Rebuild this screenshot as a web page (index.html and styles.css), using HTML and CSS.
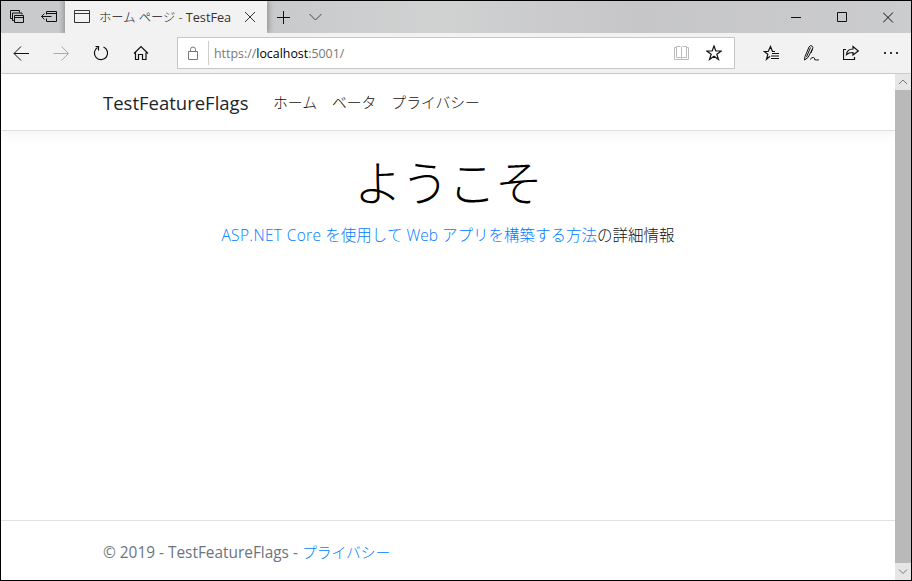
FILE: index.html
```
<!DOCTYPE html>
<html lang="ja">
<head>
<meta charset="utf-8">
<title>ホーム ページ - TestFeatureFlags</title>
<link rel="stylesheet" href="styles.css">
</head>
<body>
<div class="window">
  <div class="titlebar">
    <div class="tab-tools">
      <svg class="ic-tabs" width="16" height="16" viewBox="0 0 16 16"><path d="M3 9.500H1.500v-8h9v2M3.500 4v7.500H5M3.500 4h9.500v1.500M5.500 6.500h9v7h-9zM5.500 8.500h9"/></svg>
      <svg class="ic-aside" width="18" height="14" viewBox="0 0 18 14"><path d="M5.500 4.500v-3h10v10h-10v-3M5.500 3.500h10M.5 6.500h10M3.500 3.500l-3 3 3 3"/></svg>
    </div>
    <div class="tab">
      <svg width="16" height="14" viewBox="0 0 16 14"><path d="M.5.5h15v12H.5zM.5 3.500h15"/></svg>
      <span class="tab-title">ホーム ページ - <span class="latin">TestFea</span></span>
      <svg width="10" height="10" viewBox="0 0 10 10"><path d="M0 0l10 10M10 0L0 10"/></svg>
    </div>
    <svg class="ic-plus" width="13" height="13" viewBox="0 0 13 13"><path d="M6.500 0v13M0 6.500h13"/></svg>
    <svg class="ic-down" width="13" height="8" viewBox="0 0 13 8"><path d="M.5 1l6 6 6-6"/></svg>
    <div class="controls">
      <svg width="11" height="11" viewBox="0 0 11 11"><path d="M0 5.500h10"/></svg>
      <svg width="11" height="11" viewBox="0 0 11 11"><path d="M.5.500h9v9h-9z"/></svg>
      <svg width="11" height="11" viewBox="0 0 11 11"><path d="M0 .5l10 10M10 .5l-10 10"/></svg>
    </div>
  </div>
  <div class="toolbar">
    <div class="navigation">
      <svg width="16" height="16" viewBox="0 0 16 16"><path d="M1 8.500H16M8 1.500l-7 7 7 7"/></svg>
      <svg class="disabled" width="16" height="16" viewBox="0 0 16 16"><path d="M.5 8.500H15.500M8.500 1.500l7 7-7 7"/></svg>
      <svg class="bold" width="16" height="16" viewBox="0 0 16 16"><path d="M4.500 2.500A6.600 6.600 0 1 0 10.500 2M2.500 1.500h3v4"/></svg>
      <svg class="bold" width="16" height="16" viewBox="0 0 16 16"><path d="M1 8.500l7-7 7 7M2.500 7.500v7h3v-5h4v5h3.500v-7"/></svg>
    </div>
    <div class="address">
      <svg class="ic-lock" width="11" height="14" viewBox="0 0 11 14"><path d="M.5 5.500h9v8h-9zM2.500 5.500V3.500a2.500 2.500 0 0 1 5 0v2"/></svg>
      <div class="url">https://<b>localhost</b>:5001/</div>
      <svg class="ic-book" width="16" height="14" viewBox="0 0 16 14"><path d="M2.500 1.500h-2v12h14v-12h-2M2.500.5h4l1 1 1-1h4v11h-4l-1 1-1-1h-4zM7.500 1.500v12"/></svg>
      <svg class="ic-star" width="16" height="16" viewBox="0 0 16 16"><path d="M8 1l1.800 5h5.500l-4.500 3.200 1.700 5.300L8 11.300l-4.500 3.200 1.700-5.300L.700 6h5.500z"/></svg>
    </div>
    <div class="actions">
      <svg class="bold" width="16" height="16" viewBox="0 0 16 16"><path d="M7 11.300l-3.500 3 1.300-5L1.200 6.500h4L7.500 1.500l2 5M9 6.500h3M9 8.500h7M8 11h8M8 13.500h8"/></svg>
      <svg class="pen" width="17" height="16" viewBox="0 0 17 16"><path d="M1.500 15L2 11.500 6 2Q7.500-.5 9 1t.5 3L5 12.500 1.500 15M7.500 2.500L3.500 12M9.500 4L8 8M7 14.500q2-2.500 3.500-2t1 1.500 2 1 2.500-.5"/></svg>
      <svg class="bold" width="16" height="16" viewBox="0 0 16 16"><path d="M3 4.500H.5v10h11V12M3.500 9.500q.5-5.500 6.500-5.500V1.500l5.300 4.500L10 10V7.500q-4.500 0-6.500 2z"/></svg>
      <svg width="16" height="16" viewBox="0 0 16 16"><path class="dots" d="M1 7h2v2H1zM7 7h2v2H7zM13 7h2v2h-2z"/></svg>
    </div>
  </div>
  <div class="viewport">
    <div class="page">
      <header>
        <a class="brand">TestFeatureFlags</a>
        <nav><a>ホーム</a><a>ベータ</a><a>プライバシー</a></nav>
      </header>
      <main>
        <h1>ようこそ</h1>
        <p><a><span class="spaced">ASP.NET Core</span> を使用して Web アプリを構築する方法</a><span>の詳細情報</span></p>
      </main>
      <footer><span>© 2019 - TestFeatureFlags - </span><a>プライバシー</a></footer>
    </div>
    <div class="scrollbar">
      <svg width="16" height="16" viewBox="0 0 16 16"><path d="M4 10l4-4 4 4"/></svg>
      <div class="thumb"></div>
      <svg width="16" height="17" viewBox="0 0 16 17"><path d="M4 6.500l4 4 4-4"/></svg>
    </div>
  </div>
</div>
</body>
</html>
```
FILE: styles.css
```
* { box-sizing: border-box; }
body { margin: 0; font-family: "Open Sans", "Noto Sans CJK JP", sans-serif; }
svg { display: block; flex: none; fill: none; stroke: #111; stroke-width: 1; }
.window { width: 912px; height: 581px; border: 1px solid #000; display: flex; flex-direction: column; background: #fff; overflow: hidden; }
.titlebar { height: 32px; flex: none; display: flex; align-items: center; background: linear-gradient(90deg, #c9cacc 0, #c9cacc 30%, #d0d1d1 48%, #c6c6c9 70%, #cbcccd 100%); }
.tab-tools { width: 64px; height: 32px; display: flex; align-items: center; padding-left: 8px; gap: 16px; background: linear-gradient(90deg, transparent 90%, #aaa); }
.tab { width: 202px; height: 32px; display: flex; align-items: center; background: #f2f2f2; padding: 0 12px 0 9px; box-shadow: 2px 0 5px #0004; }
.tab svg { stroke: #333; }
.tab-title { width: 135px; margin: 0 11px 0 9px; white-space: nowrap; font-size: 12.3px; font-weight: 300; color: #111; line-height: 18px; }
.latin { font-weight: 400; font-size: 12.7px; color: #333; }
.ic-plus { margin-left: 10px; }
.ic-down { margin-left: 19px; stroke: #444; }
.controls { margin-left: auto; display: flex; gap: 35px; padding-right: 17px; }
.toolbar { height: 41px; flex: none; display: flex; align-items: center; background: #f2f2f2; border-bottom: 1px solid #ccc; }
.navigation { width: 176px; display: flex; gap: 24px; padding-left: 12px; }
.disabled { stroke: #aaa; }
.address { width: 558px; height: 32px; display: flex; align-items: center; border: 1px solid #c8c8c8; background: #fff; padding: 0 12px 0 10px; }
.ic-lock { stroke: #777; }
.url { height: 24px; border-left: 1px solid #ccc; margin-left: 9px; padding-left: 5px; font-size: 12.4px; line-height: 25px; color: #777; }
.url b { font-weight: 400; color: #000; }
.ic-book { margin-left: auto; stroke: #bbb; }
.ic-star { margin-left: 16px; stroke-width: 1.2; }
.actions { display: flex; gap: 24px; margin-left: 28px; }
.bold { stroke-width: 1.2; }
.pen { margin-right: -1px; }
.dots { fill: #333; stroke: none; }
.viewport { flex: 1; display: flex; min-height: 0; }
.page { flex: 1; display: flex; flex-direction: column; }
header { height: 57px; display: flex; align-items: center; padding-left: 102px; border-bottom: 1px solid #dee2e6; box-shadow: 0 4px 12px #0000000d; }
.brand { width: 170px; font-size: 18.5px; color: #212529; white-space: nowrap; padding-top: 1px; }
nav { display: flex; gap: 15px; font-size: 14.8px; font-weight: 300; color: #111; padding-bottom: 2px; }
main { flex: 1; display: flex; flex-direction: column; align-items: center; }
h1 { margin: 18px 0 0; font-size: 48px; font-weight: 300; line-height: 68px; letter-spacing: -1px; color: #000; }
p { margin: 6px 0 0; font-size: 15.5px; font-weight: 300; line-height: 24px; white-space: nowrap; color: #111; }
.spaced { letter-spacing: .35px; }
p a, footer a { color: #007bff; }
footer { height: 60px; border-top: 1px solid #dee2e6; padding: 3px 0 0 102px; display: flex; align-items: center; white-space: pre; font-size: 15.4px; color: #6c757d; }
footer a { font-weight: 300; font-size: 14.8px; padding-bottom: 1px; }
.scrollbar { width: 16px; display: flex; flex-direction: column; background: #e6e6e6; }
.scrollbar svg { stroke: #777; }
.thumb { flex: 1; background: #b9b9b9; }
```
